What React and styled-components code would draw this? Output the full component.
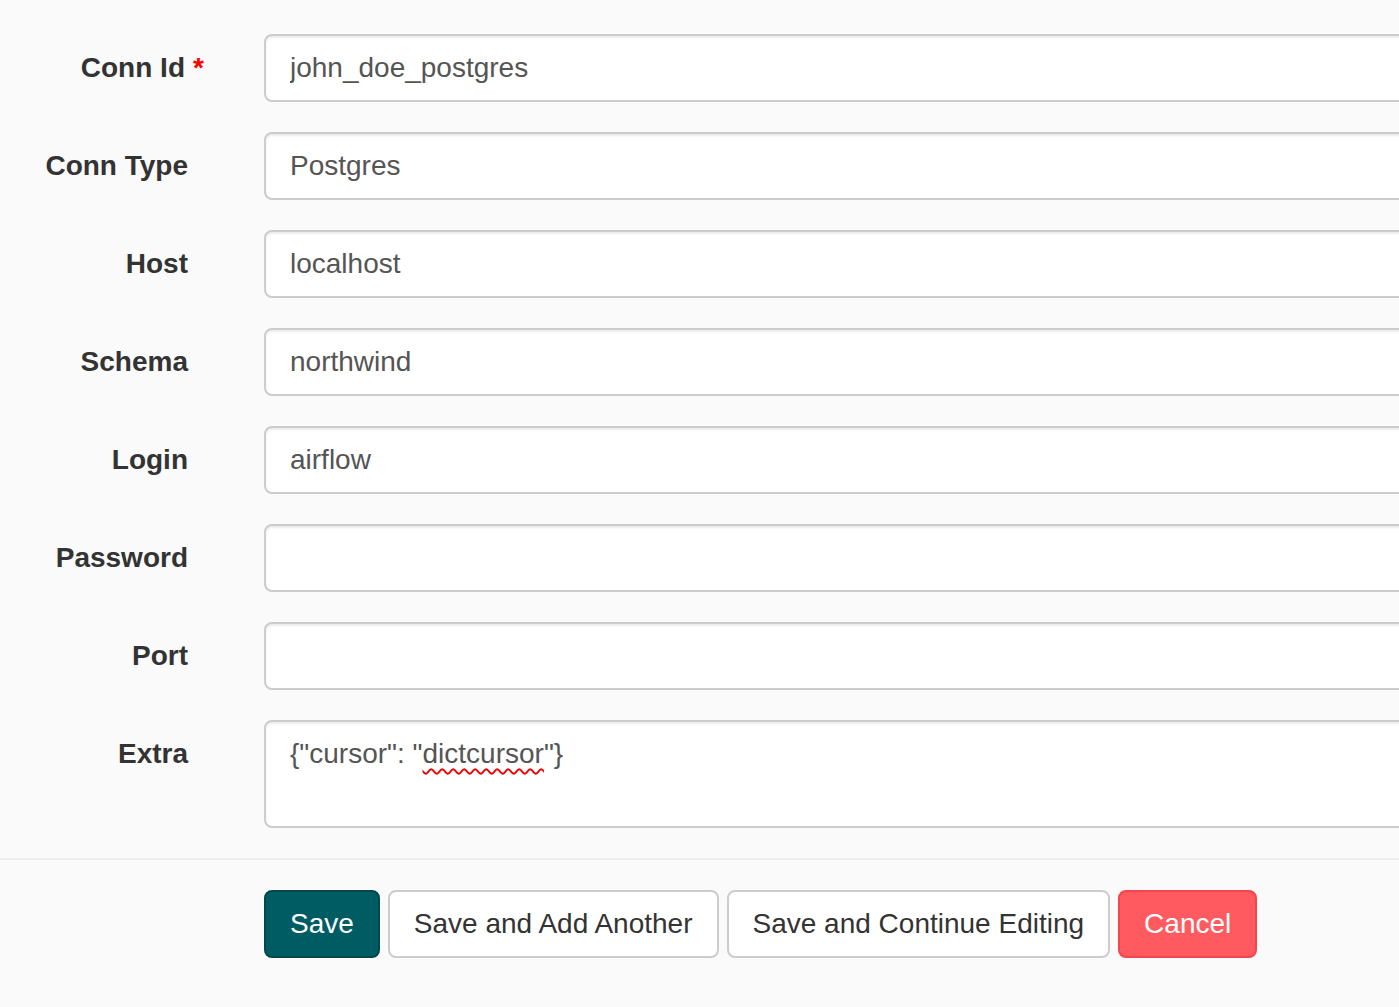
import React from "react";
import styled, { createGlobalStyle } from "styled-components";

const GlobalStyle = createGlobalStyle`
  html, body {
    margin: 0;
    padding: 0;
    background: #fafafa;
    overflow: hidden;
  }
  body {
    font-family: "Liberation Sans", Arial, sans-serif;
    color: #333;
  }
`;

const Page = styled.div`
  width: 1460px;
  padding-top: 34px;
`;

const Form = styled.form`
  display: flex;
  flex-direction: column;
  gap: 30px;
`;

const Row = styled.div`
  display: grid;
  grid-template-columns: 234px 1fr;
`;

const Label = styled.label`
  position: relative;
  text-align: right;
  padding: 14px ${(p) => (p.$required ? "49px" : "46px")} 0 0;
  font-size: 28px;
  font-weight: bold;
  line-height: 40px;
  color: #333;
`;

const Required = styled.strong`
  position: absolute;
  right: 30px;
  top: 14px;
  color: red;
`;

const Field = styled.div`
  padding-left: 30px;
`;

const Input = styled.input`
  display: block;
  box-sizing: border-box;
  width: 100%;
  height: 68px;
  padding: 12px 24px;
  font-family: "Liberation Sans", Arial, sans-serif;
  font-size: 28px;
  color: #555;
  background: #fff;
  border: 2px solid #ccc;
  border-radius: 8px;
  box-shadow: inset 0 2px 2px rgba(0, 0, 0, 0.075);
  outline: none;
`;

const TextArea = styled.div`
  box-sizing: border-box;
  width: 100%;
  height: 108px;
  padding: 12px 24px;
  font-size: 28px;
  line-height: 40px;
  color: #555;
  background: #fff;
  border: 2px solid #ccc;
  border-radius: 8px;
  box-shadow: inset 0 2px 2px rgba(0, 0, 0, 0.075);
`;

const Misspelled = styled.span`
  text-decoration: underline wavy #e00;
  text-decoration-thickness: 1.5px;
  text-underline-offset: 5px;
`;

const Actions = styled.div`
  margin-top: 30px;
  border-top: 2px solid #eee;
  padding: 30px 0 0 264px;
  display: flex;
  gap: 8px;
`;

const Button = styled.button`
  height: 68px;
  padding: 0 24px;
  font-family: "Liberation Sans", Arial, sans-serif;
  font-size: 28px;
  border-radius: 8px;
  border: 2px solid ${(p) => (p.$variant === "primary" ? "#00484d" : p.$variant === "danger" ? "#f5464d" : "#ccc")};
  background: ${(p) => (p.$variant === "primary" ? "#005c63" : p.$variant === "danger" ? "#ff5a5f" : "#fff")};
  color: ${(p) => (p.$variant ? "#fff" : "#333")};
  cursor: pointer;
`;

const fields = [
  { label: "Conn Id", value: "john_doe_postgres", required: true },
  { label: "Conn Type", value: "Postgres" },
  { label: "Host", value: "localhost" },
  { label: "Schema", value: "northwind" },
  { label: "Login", value: "airflow" },
  { label: "Password", value: "", type: "password" },
  { label: "Port", value: "" },
];

export default function App() {
  return (
    <Page>
      <GlobalStyle />
      <Form>
        {fields.map((f) => (
          <Row key={f.label}>
            <Label $required={f.required}>
              {f.label}
              {f.required && <Required>*</Required>}
            </Label>
            <Field>
              <Input type={f.type || "text"} defaultValue={f.value} />
            </Field>
          </Row>
        ))}
        <Row>
          <Label>Extra</Label>
          <Field>
            <TextArea role="textbox">
              {'{"cursor": "'}
              <Misspelled>dictcursor</Misspelled>
              {'"}'}
            </TextArea>
          </Field>
        </Row>
      </Form>
      <Actions>
        <Button $variant="primary">Save</Button>
        <Button>Save and Add Another</Button>
        <Button>Save and Continue Editing</Button>
        <Button $variant="danger">Cancel</Button>
      </Actions>
    </Page>
  );
}
